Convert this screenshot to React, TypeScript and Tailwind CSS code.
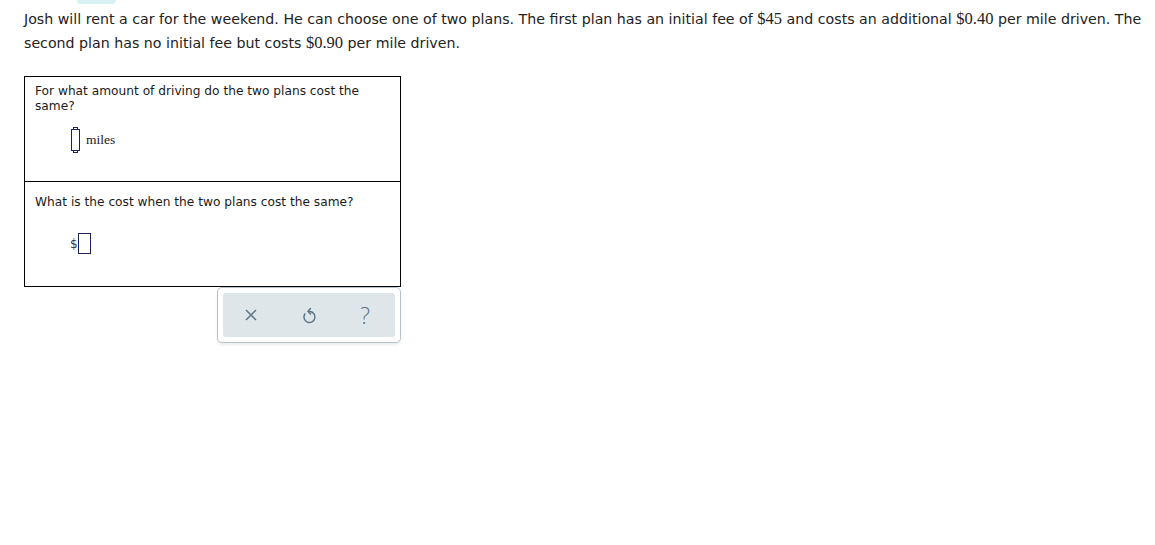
import React from "react";

const sans = "font-['Verdana','DejaVu_Sans',sans-serif]";
const serif = "font-['Liberation_Serif',serif]";

const MathInput = () => (
  <span className="relative inline-block w-[9px] h-[22px] border border-[#1b1f5e] align-middle">
    <span className="absolute left-1/2 -top-[3px] w-[5px] -ml-[2.5px] h-[3px] border-t border-x border-[#1b1f5e]" />
    <span className="absolute left-1/2 -bottom-[3px] w-[5px] -ml-[2.5px] h-[3px] border-b border-x border-[#1b1f5e]" />
  </span>
);

const Num = ({ children }: { children: React.ReactNode }) => (
  <span className="font-['Liberation_Serif',serif] text-[16.5px] leading-none">{children}</span>
);

const App = () => {
  return (
    <div className={`min-h-[545px] bg-white text-[#1a1a1a] ${sans}`}>
      <div className="ml-[77px] h-[4px] w-[39px] rounded-b-full bg-[#d8f0f4]" />

      <p className="ml-[24px] mr-[4px] mt-[3px] text-[14.2px] leading-[24px] text-[#222]">
        Josh will rent a car for the weekend. He can choose one of two plans. The first plan has an
        initial fee of <Num>$45</Num> and costs an additional <Num>$0.40</Num> per mile driven. The
        second plan has no initial fee but costs <Num>$0.90</Num> per mile driven.
      </p>

      <div className="ml-[24px] mt-[21px] w-[377px]">
        <div className="border border-black">
          <div className="h-[104px] px-[10px] pt-[7px]">
            <p className="text-[12.2px] leading-[15px] w-[335px]">
              For what amount of driving do the two plans cost the same?
            </p>
            <div className="mt-[15px] ml-[36px] flex items-center gap-[6px]">
              <MathInput />
              <span className={`${serif} text-[13.5px]`}>miles</span>
            </div>
          </div>
          <div className="h-[105px] border-t border-black px-[10px] pt-[13px]">
            <p className="text-[12.2px] leading-[15px]">What is the cost when the two plans cost the same?</p>
            <div className="mt-[23px] ml-[35px] flex items-center">
              <span className="text-[12px] text-[#333]">$</span>
              <span className="inline-block w-[13px] h-[21px] border border-[#1b1f5e]" />
            </div>
          </div>
        </div>

        <div className="flex justify-end">
          <div className="w-[184px] h-[56px] rounded-[5px] border border-[#b7c3cb] bg-white p-[5px] shadow-[0_2px_3px_rgba(0,0,0,0.08)]">
            <div className="flex h-full items-center justify-between rounded-[3px] bg-[#dfe6ea] pl-[21px] pr-[25px] text-[#5c7584]">
              <svg width="14" height="14" viewBox="0 0 14 14" fill="none" stroke="currentColor" strokeWidth="1.5">
                <path d="M2 2 L12 12 M12 2 L2 12" />
              </svg>
              <svg width="16" height="18" viewBox="0 0 16 18" fill="none" stroke="currentColor" strokeWidth="1.5" strokeLinecap="round">
                <path d="M8.5 5.5 A5.5 5.5 0 1 1 3.8 8" />
                <path d="M9.5 2.5 L7 5.3 L9.5 8" />
              </svg>
              <span className="font-['Open_Sans',sans-serif] text-[23px] leading-none font-light">?</span>
            </div>
          </div>
        </div>
      </div>
    </div>
  );
};

export default App;
